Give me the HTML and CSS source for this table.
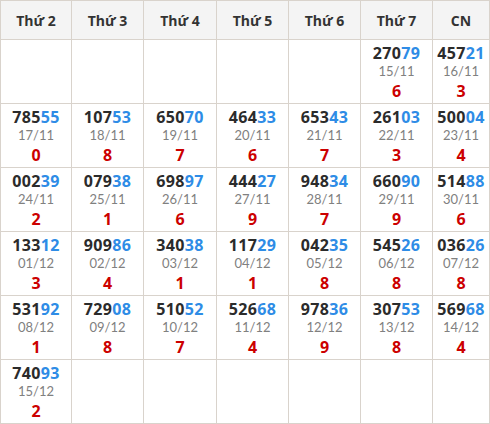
FILE: index.html
```html
<!DOCTYPE html>
<html lang="vi">
<head>
<meta charset="utf-8">
<link rel="stylesheet" href="styles.css">
</head>
<body>
<table class="cal">
<colgroup>
<col class="c1"><col class="c2"><col class="c3"><col class="c4"><col class="c5"><col class="c6"><col class="c7">
</colgroup>
<thead>
<tr><th>Thứ 2</th><th>Thứ 3</th><th>Thứ 4</th><th>Thứ 5</th><th>Thứ 6</th><th>Thứ 7</th><th>CN</th></tr>
</thead>
<tbody>
<tr>
<td></td><td></td><td></td><td></td><td></td>
<td><div class="num">270<span>79</span></div><div class="date">15/11</div><div class="dig">6</div></td>
<td><div class="num">457<span>21</span></div><div class="date">16/11</div><div class="dig">3</div></td>
</tr>
<tr>
<td><div class="num">785<span>55</span></div><div class="date">17/11</div><div class="dig">0</div></td>
<td><div class="num">107<span>53</span></div><div class="date">18/11</div><div class="dig">8</div></td>
<td><div class="num">650<span>70</span></div><div class="date">19/11</div><div class="dig">7</div></td>
<td><div class="num">464<span>33</span></div><div class="date">20/11</div><div class="dig">6</div></td>
<td><div class="num">653<span>43</span></div><div class="date">21/11</div><div class="dig">7</div></td>
<td><div class="num">261<span>03</span></div><div class="date">22/11</div><div class="dig">3</div></td>
<td><div class="num">500<span>04</span></div><div class="date">23/11</div><div class="dig">4</div></td>
</tr>
<tr>
<td><div class="num">002<span>39</span></div><div class="date">24/11</div><div class="dig">2</div></td>
<td><div class="num">079<span>38</span></div><div class="date">25/11</div><div class="dig">1</div></td>
<td><div class="num">698<span>97</span></div><div class="date">26/11</div><div class="dig">6</div></td>
<td><div class="num">444<span>27</span></div><div class="date">27/11</div><div class="dig">9</div></td>
<td><div class="num">948<span>34</span></div><div class="date">28/11</div><div class="dig">7</div></td>
<td><div class="num">660<span>90</span></div><div class="date">29/11</div><div class="dig">9</div></td>
<td><div class="num">514<span>88</span></div><div class="date">30/11</div><div class="dig">6</div></td>
</tr>
<tr>
<td><div class="num">133<span>12</span></div><div class="date">01/12</div><div class="dig">3</div></td>
<td><div class="num">909<span>86</span></div><div class="date">02/12</div><div class="dig">4</div></td>
<td><div class="num">340<span>38</span></div><div class="date">03/12</div><div class="dig">1</div></td>
<td><div class="num">117<span>29</span></div><div class="date">04/12</div><div class="dig">1</div></td>
<td><div class="num">042<span>35</span></div><div class="date">05/12</div><div class="dig">8</div></td>
<td><div class="num">545<span>26</span></div><div class="date">06/12</div><div class="dig">8</div></td>
<td><div class="num">036<span>26</span></div><div class="date">07/12</div><div class="dig">8</div></td>
</tr>
<tr>
<td><div class="num">531<span>92</span></div><div class="date">08/12</div><div class="dig">1</div></td>
<td><div class="num">729<span>08</span></div><div class="date">09/12</div><div class="dig">8</div></td>
<td><div class="num">510<span>52</span></div><div class="date">10/12</div><div class="dig">7</div></td>
<td><div class="num">526<span>68</span></div><div class="date">11/12</div><div class="dig">4</div></td>
<td><div class="num">978<span>36</span></div><div class="date">12/12</div><div class="dig">9</div></td>
<td><div class="num">307<span>53</span></div><div class="date">13/12</div><div class="dig">8</div></td>
<td><div class="num">569<span>68</span></div><div class="date">14/12</div><div class="dig">4</div></td>
</tr>
<tr>
<td><div class="num">740<span>93</span></div><div class="date">15/12</div><div class="dig">2</div></td>
<td></td><td></td><td></td><td></td><td></td><td></td>
</tr>
</tbody>
</table>
</body>
</html>
```

FILE: styles.css
```css
html, body {
  margin: 0;
  padding: 0;
  background: #fff;
}
body {
  font-family: "Open Sans", "Liberation Sans", sans-serif;
  color: #2b2b2b;
}
.cal {
  border-collapse: collapse;
  table-layout: fixed;
  width: 490px;
}
.c1 { width: 71px; }
.c2 { width: 72px; }
.c3 { width: 73px; }
.c4 { width: 72px; }
.c5 { width: 72px; }
.c6 { width: 72px; }
.c7 { width: 57px; }
.cal th, .cal td {
  border: 1px solid #d9d3cc;
  text-align: center;
  padding: 0;
}
.cal th {
  height: 38px;
  background: #f4f4f4;
  font-size: 14px;
  font-weight: 700;
  color: #333;
}
.cal td {
  height: 63px;
  vertical-align: top;
}
.num {
  margin-top: 2px;
  font-size: 16px;
  font-weight: 700;
  line-height: 22px;
  color: #2b2b2b;
  letter-spacing: 0.3px;
}
.num span {
  color: #2e8ce6;
}
.date {
  font-family: Lato, "Open Sans", sans-serif;
  font-size: 13px;
  line-height: 15.6px;
  color: #808080;
}
.dig {
  font-size: 16px;
  font-weight: 700;
  line-height: 22px;
  color: #cc0000;
}
```
